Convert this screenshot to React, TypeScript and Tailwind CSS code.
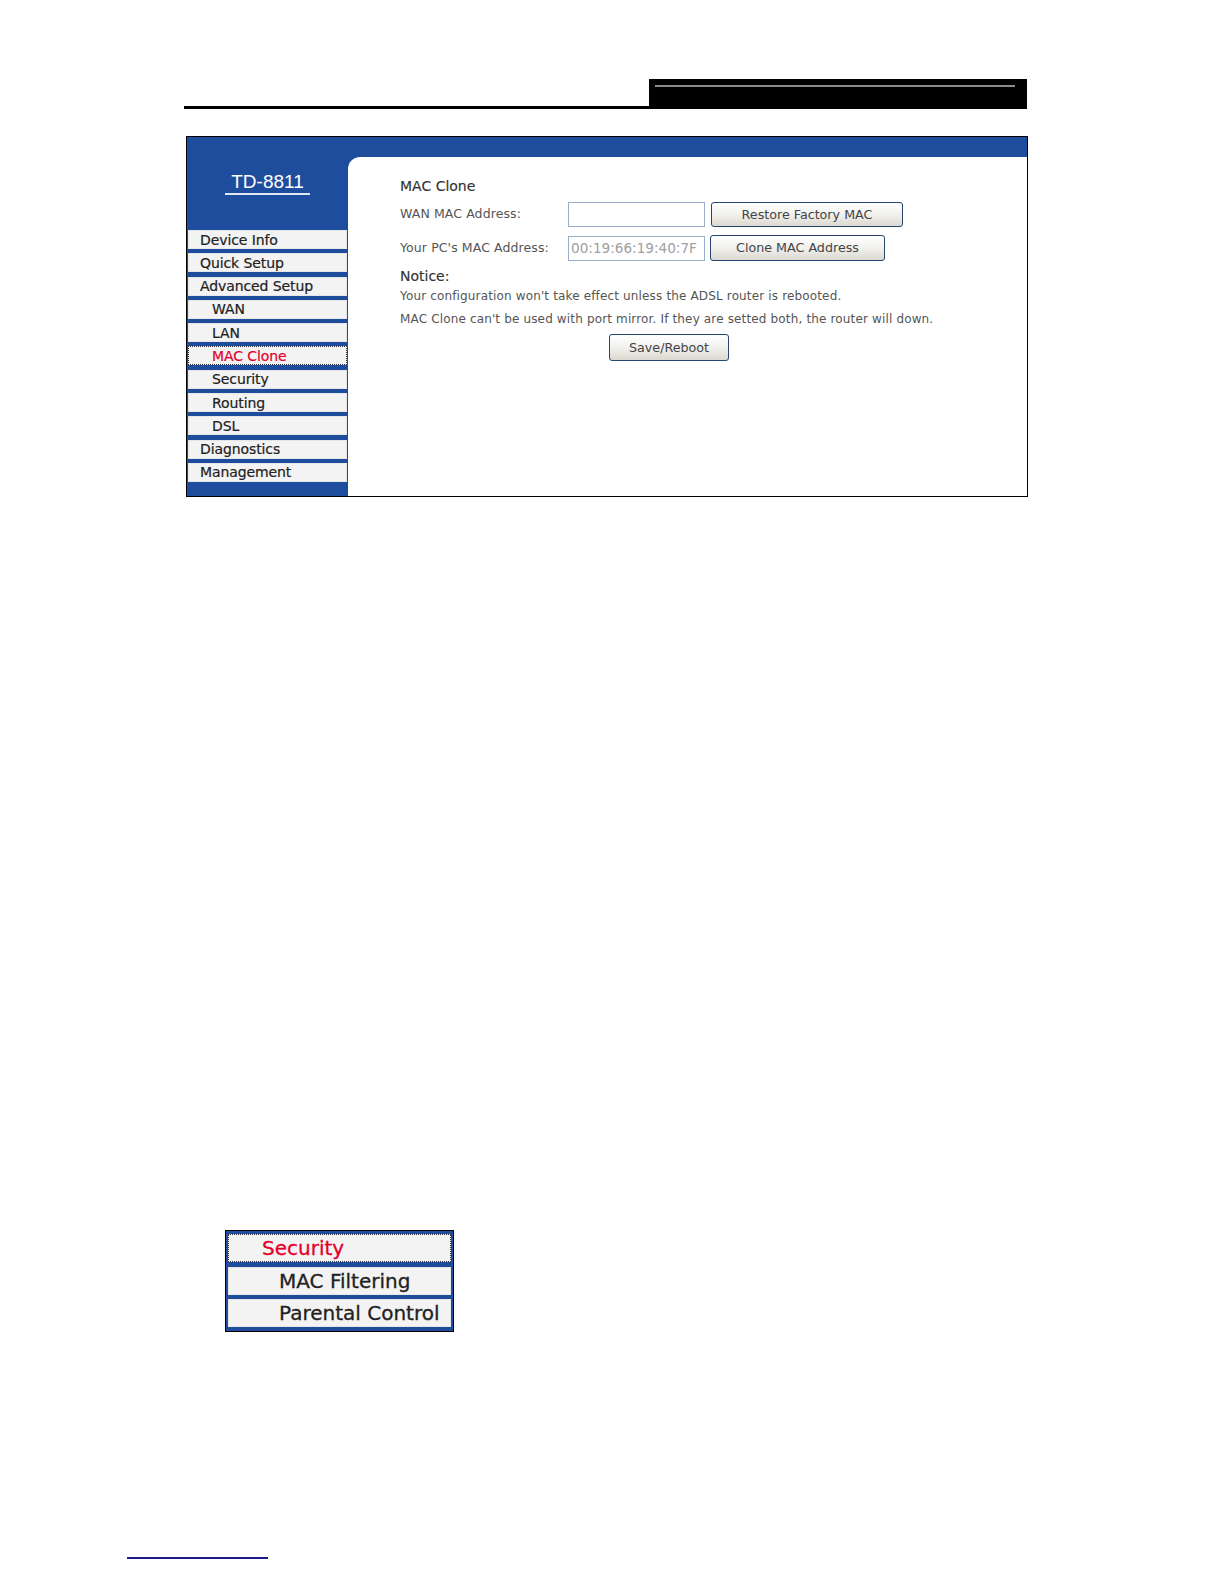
import React from "react";

const F = { fontFamily: '"DejaVu Sans", Verdana, sans-serif' };

function NavItem({ label, sub, active }: { label: string; sub?: boolean; active?: boolean }) {
  return (
    <div
      className={
        "h-[19px] mx-[1px] flex items-center text-[14px] leading-none bg-[#f3f3f3] tracking-[-0.1px] [-webkit-text-stroke:0.2px] " +
        (active ? "border border-dotted border-[#333] text-[#e4002b] " : "border border-[#e6e6e6] text-[#222] ") +
        (sub ? "pl-[23px]" : "pl-[11px]")
      }
    >
      {label}
    </div>
  );
}

function XPButton({ children, w, h }: { children: React.ReactNode; w: string; h: string }) {
  return (
    <div
      className={
        "flex items-center justify-center rounded-[3px] border border-[#24466f] text-[12.7px] text-[#444] bg-gradient-to-b from-[#ffffff] via-[#f1f1ee] to-[#dcd8cf] " +
        w +
        " " +
        h
      }
    >
      {children}
    </div>
  );
}

export default function App() {
  return (
    <div className="w-[1224px] h-[1584px] bg-white relative overflow-hidden" style={F}>
      {/* header */}
      <div className="ml-[184px] w-[843px] pt-[79px] flex items-end">
        <div className="flex-1 h-[30px] border-b-[3px] border-black"></div>
        <div className="w-[378px] h-[30px] bg-black pt-[6px] pl-[6px] pr-[12px]">
          <div className="h-[2px] bg-[#8a8a8a]"></div>
        </div>
      </div>

      {/* screenshot frame */}
      <div className="ml-[186px] mt-[27px] w-[842px] h-[361px] border border-black bg-[#1f4d9e] flex">
        <div className="w-[161px] flex flex-col">
          <div className="h-[93px] flex flex-col items-center pt-[35px]">
            <div
              className="text-white text-[19px] leading-[20px] px-[6px] border-b-[2px] border-[#dfe7f5] pb-[1px]"
              style={{ fontFamily: '"Liberation Sans", Arial, sans-serif' }}
            >
              TD-8811
            </div>
          </div>
          <div className="flex flex-col gap-[4.3px]">
            <NavItem label="Device Info" />
            <NavItem label="Quick Setup" />
            <NavItem label="Advanced Setup" />
            <NavItem label="WAN" sub />
            <NavItem label="LAN" sub />
            <NavItem label="MAC Clone" sub active />
            <NavItem label="Security" sub />
            <NavItem label="Routing" sub />
            <NavItem label="DSL" sub />
            <NavItem label="Diagnostics" />
            <NavItem label="Management" />
          </div>
        </div>
        <div className="flex-1 flex flex-col pt-[20px]">
          <div className="flex-1 bg-white rounded-tl-[12px] pl-[52px] pt-[20px] text-[#555]">
            <div className="h-[18px] leading-[18px] text-[14px] text-[#333] [-webkit-text-stroke:0.15px]">MAC Clone</div>
            <div className="mt-[7px] flex items-center">
              <div className="w-[168px] text-[12.5px] tracking-[0.1px]">WAN MAC Address:</div>
              <div className="w-[137px] h-[25px] border border-[#98aecb] bg-white"></div>
              <div className="ml-[6px]">
                <XPButton w="w-[192px]" h="h-[25px]">Restore Factory MAC</XPButton>
              </div>
            </div>
            <div className="mt-[8px] flex items-center">
              <div className="w-[168px] text-[12.5px] tracking-[0.1px]">Your PC's MAC Address:</div>
              <div className="w-[137px] h-[25px] border border-[#98aecb] bg-white flex items-center pl-[2px] text-[13.6px] text-[#a0a0a0] overflow-hidden whitespace-nowrap">
                00:19:66:19:40:7F
              </div>
              <div className="ml-[5px]">
                <XPButton w="w-[175px]" h="h-[26px]">Clone MAC Address</XPButton>
              </div>
            </div>
            <div className="mt-[7px] h-[16px] leading-[16px] text-[14px] text-[#333] [-webkit-text-stroke:0.15px]">Notice:</div>
            <div className="mt-[4px] h-[16px] leading-[16px] text-[12px] tracking-[0.15px] whitespace-nowrap">
              Your configuration won't take effect unless the ADSL router is rebooted.
            </div>
            <div className="mt-[7px] h-[16px] leading-[16px] text-[12px] tracking-[0.15px] whitespace-nowrap">
              MAC Clone can't be used with port mirror. If they are setted both, the router will down.
            </div>
            <div className="mt-[7px] ml-[209px]">
              <XPButton w="w-[120px]" h="h-[27px]">Save/Reboot</XPButton>
            </div>
          </div>
        </div>
      </div>

      {/* security snippet */}
      <div className="ml-[225px] mt-[733px] w-[229px] h-[102px] border border-black bg-[#1f4d9e] px-[2px] pt-[3px] flex flex-col gap-[4.5px]">
        <div className="h-[28px] bg-[#f3f3f3] border border-dotted border-[#333] flex items-center pl-[33px] text-[20px] text-[#e4002b] leading-none [-webkit-text-stroke:0.3px]">
          Security
        </div>
        <div className="h-[28px] bg-[#f3f3f3] border border-[#e6e6e6] flex items-center pl-[50px] text-[20px] text-[#222] leading-none [-webkit-text-stroke:0.3px]">
          MAC Filtering
        </div>
        <div className="h-[28px] bg-[#f3f3f3] border border-[#e6e6e6] flex items-center pl-[50px] text-[20px] text-[#222] leading-none [-webkit-text-stroke:0.3px]">
          Parental Control
        </div>
      </div>

      {/* footer underline */}
      <div className="ml-[127px] mt-[225px] w-[141px] h-[2px] bg-[#1a1a8c]"></div>
    </div>
  );
}
